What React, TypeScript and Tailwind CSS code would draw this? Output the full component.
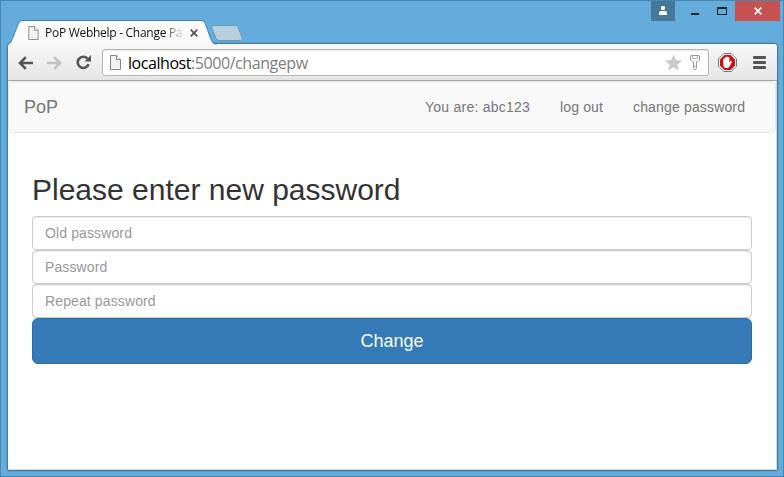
import React from 'react';

const PageIcon = ({ className }: { className: string }) => (
  <svg className={className} viewBox="0 0 11 15" fill="none">
    <path d="M.5.5h6l4 4v10H.5z" fill="#f3f3f3" stroke="#858585" />
    <path d="M6.5.5v4h4" fill="#fff" stroke="#858585" />
  </svg>
);

function TitleBar() {
  return (
    <div className="relative flex h-[43px] shrink-0 items-start">
      <svg className="absolute left-0 top-0 z-10 h-[45px] w-[260px]" viewBox="0 0 260 45">
        <defs>
          <linearGradient id="tab" x1="0" x2="0" y1="20" y2="45" gradientUnits="userSpaceOnUse">
            <stop stopColor="#fff" />
            <stop offset="1" stopColor="#f8f8f8" />
          </linearGradient>
        </defs>
        <path
          d="M6.5 45 C10 44 10.8 42.5 12 39.5 L18.5 23.5 Q19.8 20.5 22.5 20.5 H201 Q204 20.5 205.2 23.5 L211 39.5 C212.2 42.5 213 44.3 217 44.5 V45 Z"
          fill="url(#tab)"
        />
        <path
          d="M7 44.5 C10 44 10.8 42.5 12 39.5 L18.5 23.5 Q19.8 20.5 22.5 20.5 H201 Q204 20.5 205.2 23.5 L211 39.5 C212.2 42.5 213 44 217 44"
          fill="none"
          stroke="#4183ad"
        />
        <path
          d="M213.5 25.5 H235.5 Q237.5 25.5 238.2 27.5 L242.2 38.5 Q242.8 40.5 240.5 40.5 H219 Q216.8 40.5 216 38.5 L211.7 27.5 Q211 25.5 213.5 25.5Z"
          fill="#b8cfde"
          stroke="#629cc0"
        />
      </svg>
      <div className="relative z-20 ml-[28px] mt-[26px] flex h-[14px] items-center">
        <PageIcon className="h-[14px] w-[11px]" />
        <div className="ml-[6px] w-[139px] whitespace-nowrap bg-[linear-gradient(90deg,#111_122px,#11111188_127px,#11111122_138px)] bg-clip-text font-['Open_Sans','Noto_Sans',sans-serif] text-[12px] leading-[18px] tracking-[-0.28px] text-transparent">
          PoP Webhelp - Change Pa
        </div>
        <svg className="ml-[6px] h-[8px] w-[8px]" viewBox="0 0 8 8">
          <path d="M.7.7l6.6 6.6M7.3.7L.7 7.3" stroke="#585858" strokeWidth="1.8" />
        </svg>
      </div>
      <div className="ml-auto mr-[4px] mt-px flex h-[20px]">
        <div className="flex w-[24px] justify-center bg-[#467998]">
          <svg className="mt-[5px] h-[9px] w-[8px]" viewBox="0 0 8 9" fill="#fff">
            <rect x="2" width="4" height="4" rx="1.2" />
            <path d="M0 9V7q0-2 2-2h4q2 0 2 2v2z" />
          </svg>
        </div>
        <svg className="h-[20px] w-[60px]" viewBox="0 0 60 20">
          <path d="M16 12h8v2h-8z" fill="#1f252a" />
          <path d="M42 6h10v8H42z M43 8v5h8V8z" fill="#1f252a" fillRule="evenodd" />
        </svg>
        <div className="flex w-[45px] items-center justify-center bg-[#c75050]">
          <svg className="h-[8px] w-[8px]" viewBox="0 0 8 8">
            <path d="M.7.7l6.6 6.6M7.3.7L.7 7.3" stroke="#fff" strokeWidth="1.7" />
          </svg>
        </div>
      </div>
    </div>
  );
}

function Toolbar() {
  return (
    <div className="flex h-[37px] shrink-0 items-center rounded-t-[3px] border-b border-[#a5a5a5] bg-gradient-to-b from-[#f8f8f8] to-[#e5e5e5] pt-px">
      <svg className="ml-[10px] h-[14px] w-[15px]" viewBox="0 0 15 14" fill="none" stroke="#545454" strokeWidth="2.6">
        <path d="M7.8 1.2L2 7l5.8 5.8M2.5 7H15" />
      </svg>
      <svg className="ml-[14px] h-[14px] w-[15px]" viewBox="0 0 15 14" fill="none" stroke="#c2c2c2" strokeWidth="2.6">
        <path d="M7.2 1.2L13 7l-5.8 5.8M12.5 7H0" />
      </svg>
      <svg className="ml-[14px] h-[15px] w-[15px]" viewBox="0 0 15 15">
        <path d="M12.6 9.2A5.6 5.6 0 1 1 11.5 3.6" fill="none" stroke="#545454" strokeWidth="2.6" />
        <path d="M15 0v6.5H8.5z" fill="#545454" />
      </svg>
      <div className="ml-[11px] flex h-[27px] w-[607px] items-center rounded-[3px] border border-[#b5b5b5] bg-white pl-[7px] pr-[6px] shadow-[inset_0_1px_1px_#e8e8e8]">
        <PageIcon className="h-[15px] w-[11px]" />
        <div className="ml-[7px] whitespace-nowrap font-['Open_Sans','Noto_Sans',sans-serif] text-[16px] leading-[22px] tracking-[-0.44px] text-[#808080]">
          <span className="text-black">localhost</span>:5000/changepw
        </div>
        <svg className="ml-auto h-[17px] w-[17px]" viewBox="0 0 17 16">
          <path d="M8.5 0l2.3 5.6 6.2.5-4.7 4 1.5 5.9-5.3-3.2L3.2 16l1.5-5.9L0 6.1l6.2-.5z" fill="#c9c9c9" />
        </svg>
        <svg className="ml-[8px] mr-[2px] h-[15px] w-[10px]" viewBox="0 0 10 15" fill="#fff" stroke="#9c9c9c">
          <path d="M1 .5h8l.5.5v4L7.5 7H6.5v6.5l-1 1h-1l-1-1V7h-1L.5 5V1z" />
          <path d="M2.5 1v2.5h5V1M5 10v2.5" fill="none" strokeWidth=".8" />
        </svg>
      </div>
      <svg className="ml-[9px] h-[19px] w-[19px]" viewBox="0 0 19 19">
        <path d="M5.8.5h7.4l5.3 5.3v7.4l-5.3 5.3H5.8L.5 13.2V5.8z" fill="#fff" stroke="#777" />
        <path d="M6.4 2h6.2L17 6.4v6.2L12.6 17H6.4L2 12.6V6.4z" fill="#d30c14" />
        <path d="M5.2 10.5V6q.8-.8 1.5 0v3V4.6q.8-.8 1.5 0V8.5V4q.9-.8 1.7 0v4.5V4.6q.8-.8 1.5 0v5l1.5-1.8q1.2-.4 1.2.5l-2.1 4.7q-.9 2-3 2-3.8 0-3.8-3.6z" fill="#fff" />
      </svg>
      <div className="ml-[16px] flex w-[13px] flex-col gap-[2px]">
        <div className="h-[3px] rounded-[1px] bg-[#545454]" />
        <div className="h-[3px] rounded-[1px] bg-[#545454]" />
        <div className="h-[3px] rounded-[1px] bg-[#545454]" />
      </div>
    </div>
  );
}

const fields = ['Old password', 'Password', 'Repeat password'];

export default function App() {
  return (
    <div className="flex h-[477px] w-[784px] flex-col overflow-hidden border border-[#4886ad] bg-[#64acdb] font-['Liberation_Sans',Arial,sans-serif]">
      <div className="-ml-px -mt-px w-[784px]">
        <TitleBar />
      </div>
      <div className="ml-[6px] flex h-[428px] w-[771px] shrink-0 flex-col overflow-hidden rounded-t-[4px] rounded-b-[2px] border border-[#427ca2] bg-white shadow-[0_0_2px_#4183ad]">
        <Toolbar />
        <div className="flex grow flex-col border-r border-b border-[#d9d9d9]">
          <nav className="flex h-[52px] w-[768px] items-center rounded-[4px] border border-[#e7e7e7] bg-[#f8f8f8] text-[14px] leading-[20px] text-[#777]">
            <div className="ml-[15px] text-[18px]">PoP</div>
            <div className="ml-auto mr-[30px] flex gap-[30px]">
              <span className="w-[105px] whitespace-nowrap tracking-[0.24px]">You are: abc123</span>
              <span className="w-[43px] whitespace-nowrap tracking-[0.14px]">log out</span>
              <span className="w-[112px] whitespace-nowrap tracking-[0.16px]">change password</span>
            </div>
          </nav>
          <main className="mx-[24px] mt-[40px] flex w-[720px] flex-col">
            <h2 className="mb-[10px] text-[30px] font-medium leading-[33px] text-[#333]">
              Please enter new password
            </h2>
            {fields.map((label) => (
              <input
                key={label}
                type="password"
                placeholder={label}
                className="h-[34px] rounded-[4px] border border-[#ccc] bg-white pl-[12px] pr-[12px] text-[14px] leading-[20px] tracking-[0.12px] shadow-[inset_0_1px_1px_rgba(0,0,0,0.075)] placeholder:text-[#999]"
              />
            ))}
            <button className="h-[46px] rounded-[6px] border border-[#2e6da4] bg-[#337ab7] text-[18px] leading-[24px] text-white">
              Change
            </button>
          </main>
        </div>
      </div>
    </div>
  );
}
